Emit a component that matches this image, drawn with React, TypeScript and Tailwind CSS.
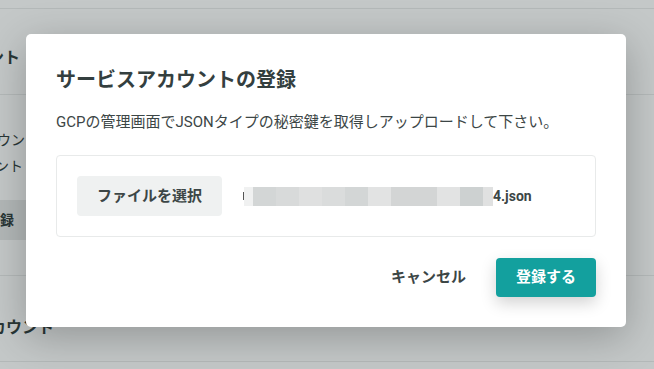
import React from "react";

const blocks = [
  { w: 9, c: "#f0f1f1" },
  { w: 23, c: "#d3d6d6" },
  { w: 23, c: "#d8dada" },
  { w: 23, c: "#dfe0e0" },
  { w: 23, c: "#dadcdc" },
  { w: 23, c: "#d3d6d6" },
  { w: 23, c: "#e2e3e3" },
  { w: 46, c: "#d3d5d5" },
  { w: 23, c: "#e2e3e3" },
  { w: 23, c: "#cdd1d1" },
  { w: 10, c: "#e0e1e1" },
];

function BackgroundPage() {
  return (
    <div className="h-[369px] w-full overflow-hidden bg-[#fbfcfc] text-[#2c3a3a]">
      <div className="h-[9px] border-b border-[#e6e8e8]" />
      <div className="flex h-[86px] items-center border-b border-[#e6e8e8] pt-[12px]">
        <span className="ml-[-124px] whitespace-nowrap text-[16px] font-bold">サービスアカウント</span>
      </div>
      <div className="flex h-[181px] flex-col border-b border-[#e6e8e8] pt-[32px]">
        <span className="ml-[-87px] whitespace-nowrap text-[14px] leading-[26px]">サービスアカウン</span>
        <span className="ml-[-47px] whitespace-nowrap text-[14px] leading-[26px]">アカウント</span>
        <div className="mt-[21px] flex h-[40px] w-[40px] items-center bg-[#e4e7e7]">
          <span className="ml-[-14px] whitespace-nowrap text-[14px] font-bold">登録</span>
        </div>
      </div>
      <div className="flex h-[86px] items-center border-b border-[#e6e8e8]">
        <span className="ml-[-89px] mt-[18px] whitespace-nowrap text-[16px] font-bold">ユーザーアカウント</span>
      </div>
    </div>
  );
}

export default function App() {
  return (
    <div
      className="relative h-[369px] w-[654px] overflow-hidden"
      style={{ fontFamily: "Roboto, 'Noto Sans CJK JP', sans-serif" }}
    >
      <BackgroundPage />
      <div className="absolute inset-0 flex items-start justify-start bg-[#1e2a2a]/25 pl-[26px] pt-[34px]">
        <div className="flex w-[600px] flex-col rounded-[5px] bg-white px-[30px] pb-[30px] pt-[31px] shadow-[0_10px_40px_rgba(0,0,0,0.25)]">
          <h2 className="text-[20px] font-bold leading-[30px] text-[#343f3f]">サービスアカウントの登録</h2>
          <p className="mt-[15px] text-[15px] leading-[24px] text-[#3c4646]">
            GCPの管理画面でJSONタイプの秘密鍵を取得しアップロードして下さい。
          </p>
          <div className="mt-[21px] flex h-[82px] items-center rounded-[4px] border border-[#e8eaea] px-[20px]">
            <button
              type="button"
              className="h-[40px] w-[145px] rounded-[4px] bg-[#eff1f1] text-[15px] font-bold text-[#3c4646]"
            >
              ファイルを選択
            </button>
            <div className="ml-[21px] flex items-center">
              <span className="h-[8px] w-[1px] bg-[#555]" />
              <div className="flex h-[19px]">
                {blocks.map((b, i) => (
                  <span key={i} className="h-full" style={{ width: b.w, background: b.c }} />
                ))}
              </div>
              <span className="text-[14px] font-bold text-[#3c4646]">4.json</span>
            </div>
          </div>
          <div className="mt-[21px] flex items-center justify-end">
            <button type="button" className="text-[15px] font-bold text-[#3c4646]">
              キャンセル
            </button>
            <button
              type="button"
              className="ml-[30px] h-[39px] w-[100px] rounded-[4px] bg-[#13a09e] text-[15px] font-bold text-white shadow-[0_6px_16px_rgba(0,0,0,0.18)]"
            >
              登録する
            </button>
          </div>
        </div>
      </div>
    </div>
  );
}
